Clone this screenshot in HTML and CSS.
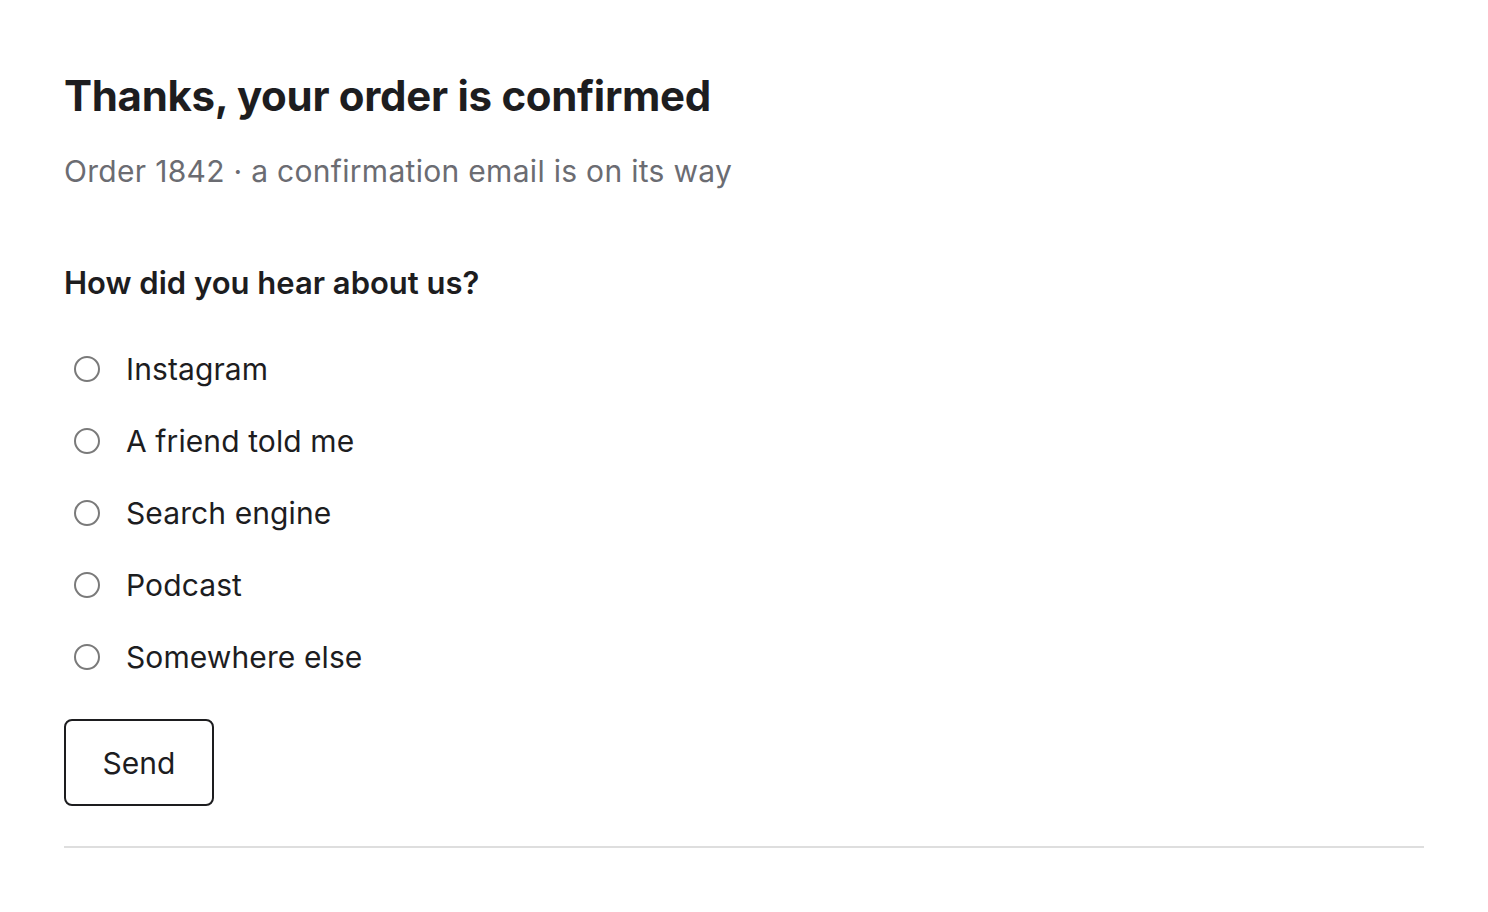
FILE: index.html
```html
<!DOCTYPE html>
<html lang="en">
<head>
    <meta charset="UTF-8">
    <meta name="viewport" content="width=device-width, initial-scale=1.0">
    <title>Order confirmed</title>
    <link rel="stylesheet" href="styles.css">
</head>
<body>
    <main class="page">
        <h1 class="title">Thanks, your order is confirmed</h1>
        <p class="subtitle">Order 1842 · a confirmation email is on its way</p>

        <form class="survey">
            <h2 class="question">How did you hear about us?</h2>
            <div class="options">
                <label class="option"><input type="radio" name="source" value="instagram"><span>Instagram</span></label>
                <label class="option"><input type="radio" name="source" value="friend"><span>A friend told me</span></label>
                <label class="option"><input type="radio" name="source" value="search"><span>Search engine</span></label>
                <label class="option"><input type="radio" name="source" value="podcast"><span>Podcast</span></label>
                <label class="option"><input type="radio" name="source" value="other"><span>Somewhere else</span></label>
            </div>
            <button type="button" class="send">Send</button>
        </form>
        <hr class="divider">
    </main>
</body>
</html>
```

FILE: styles.css
```css
* {
    margin: 0;
    padding: 0;
    box-sizing: border-box;
}
body {
    font-family: 'Inter', 'Noto Sans', sans-serif;
    background: #fff;
    color: #1d1d1f;
}
.page {
    padding: 70px 64px 0;
}
.title {
    font-size: 42px;
    font-weight: 700;
    letter-spacing: -0.3px;
    line-height: 52px;
}
.subtitle {
    margin-top: 29px;
    font-size: 30px;
    letter-spacing: 0.3px;
    color: #6b6c72;
    line-height: 40px;
}
.survey {
    margin-top: 72px;
}
.question {
    font-size: 31px;
    font-weight: 600;
    line-height: 40px;
}
.options {
    display: flex;
    flex-direction: column;
    gap: 32px;
    margin-top: 46px;
}
.option {
    display: flex;
    align-items: center;
    gap: 26px;
    font-size: 30px;
    letter-spacing: 0.1px;
    line-height: 40px;
}
.option input {
    appearance: none;
    width: 26px;
    height: 26px;
    margin-left: 10px;
    border: 2px solid #7a7a7a;
    border-radius: 50%;
    background: #fff;
}
.send {
    margin-top: 42px;
    width: 150px;
    height: 87px;
    font-family: inherit;
    font-size: 30px;
    color: #1d1d1f;
    background: #fff;
    border: 2px solid #1d1d1f;
    border-radius: 8px;
}
.divider {
    margin-top: 40px;
    border: 0;
    border-top: 2px solid #dedede;
}
```
